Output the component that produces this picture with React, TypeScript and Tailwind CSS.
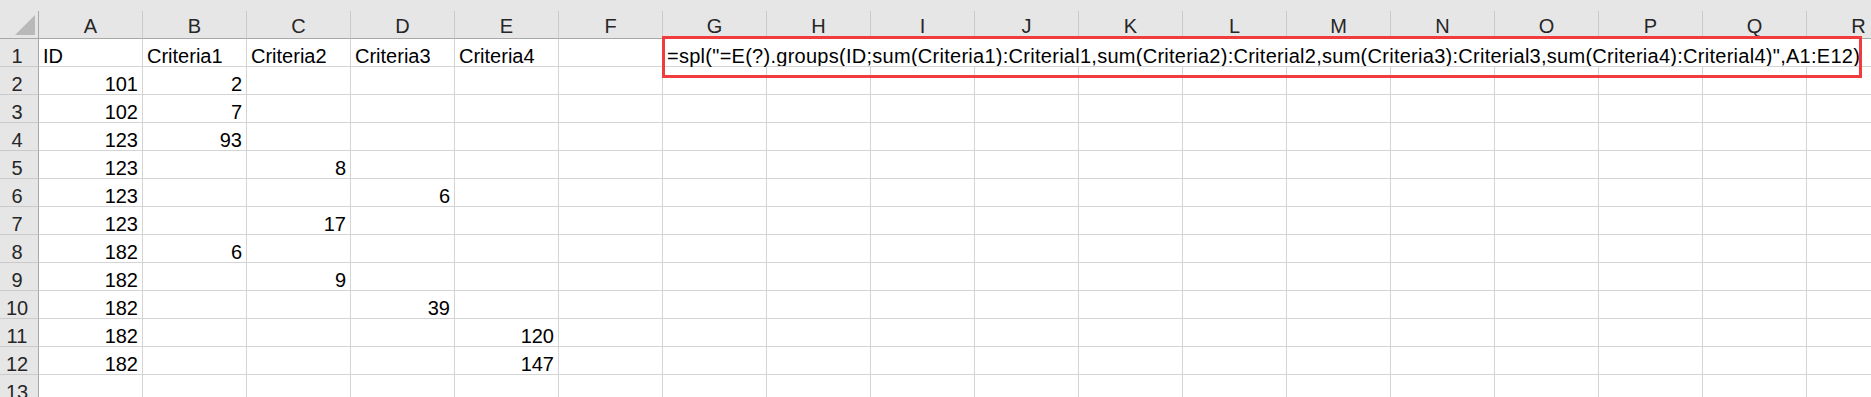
const COLS = ['A', 'B', 'C', 'D', 'E', 'F', 'G', 'H', 'I', 'J', 'K', 'L', 'M', 'N', 'O', 'P', 'Q', 'R']

const FORMULA =
  '=spl("=E(?).groups(ID;sum(Criteria1):Criterial1,sum(Criteria2):Criterial2,sum(Criteria3):Criterial3,sum(Criteria4):Criterial4)",A1:E12)'

type Row = Record<string, string | number>

const ROWS: Row[] = [
  { A: 'ID', B: 'Criteria1', C: 'Criteria2', D: 'Criteria3', E: 'Criteria4', G: FORMULA },
  { A: 101, B: 2 },
  { A: 102, B: 7 },
  { A: 123, B: 93 },
  { A: 123, C: 8 },
  { A: 123, D: 6 },
  { A: 123, C: 17 },
  { A: 182, B: 6 },
  { A: 182, C: 9 },
  { A: 182, D: 39 },
  { A: 182, E: 120 },
  { A: 182, E: 147 },
  {},
]

function Cell({ value, spill, formula }: { value?: string | number; spill: boolean; formula: boolean }) {
  const isNum = typeof value === 'number'
  return (
    <div
      className={
        'w-[104px] shrink-0 h-[28px] flex items-end px-[4px] border-b border-[#d4d4d4] ' +
        (spill ? 'border-r-0 ' : 'border-r ') +
        (isNum ? 'justify-end' : 'justify-start')
      }
    >
      {value !== undefined && (
        <span
          className={
            'whitespace-nowrap leading-[20px] text-black ' + (formula ? 'text-[20px] tracking-[0.27px]' : 'text-[20px]')
          }
        >
          {value}
        </span>
      )}
    </div>
  )
}

export default function App() {
  return (
    <div className="relative w-[1871px] h-[397px] overflow-hidden bg-white font-['Liberation_Sans',Arial,sans-serif]">
      {/* strip above the column letters */}
      <div className="h-[11px] bg-[#e6e6e6]" />

      {/* Column header */}
      <div className="flex h-[28px]">
        <div className="w-[39px] shrink-0 h-full flex items-end justify-end pr-[3px] pb-[3px] bg-[#e6e6e6] border-r border-b border-r-[#a8a8a8] border-b-[#a8a8a8]">
          <svg width="20" height="20" viewBox="0 0 20 20">
            <polygon points="0,20 20,20 20,0" fill="#b9b9b9" />
          </svg>
        </div>
        {COLS.map((c) => (
          <div
            key={c}
            className="w-[104px] shrink-0 h-full flex items-end justify-center pb-[2px] bg-[#e6e6e6] border-r border-b border-r-[#cacaca] border-b-[#a8a8a8]"
          >
            <span className="leading-[20px] text-[20px] text-[#262626]">{c}</span>
          </div>
        ))}
      </div>

      {/* Rows */}
      {ROWS.map((row, i) => (
        <div key={i} className="flex h-[28px]">
          <div className="w-[39px] shrink-0 h-full flex items-end justify-center pr-[4px] bg-[#e6e6e6] border-r border-b border-r-[#a8a8a8] border-b-[#cacaca]">
            <span className="leading-[20px] text-[20px] text-[#262626]">{i + 1}</span>
          </div>
          {COLS.map((c, ci) => (
            <Cell key={c} value={row[c]} spill={i === 0 && ci >= 6} formula={i === 0 && c === 'G'} />
          ))}
        </div>
      ))}

      {/* Red highlight round the formula */}
      <div className="absolute left-[662px] top-[36px] w-[1200px] h-[42px] border-[3px] border-[#f03c3c]" />
    </div>
  )
}
